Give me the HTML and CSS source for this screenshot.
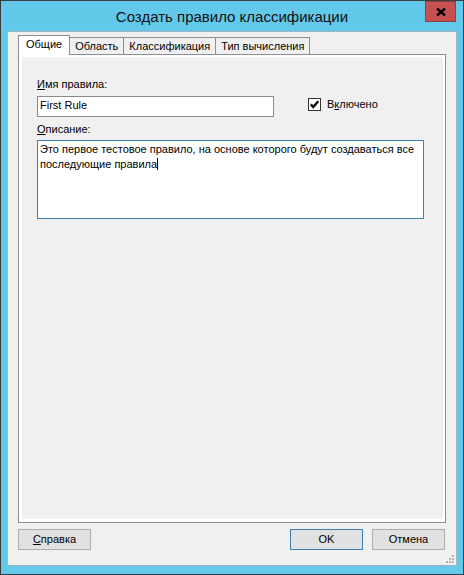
FILE: index.html
```html
<!DOCTYPE html>
<html lang="ru">
<head>
<meta charset="utf-8">
<title>Создать правило классификации</title>
<link rel="stylesheet" href="styles.css">
</head>
<body>
<div class="window">
  <header class="titlebar">
    <span class="title-spacer"></span>
    <h1 class="title">Создать правило классификации</h1>
    <button class="close" type="button" aria-label="Закрыть">
      <svg width="10" height="8" viewBox="0 0 10 8" aria-hidden="true">
        <path d="M1 0.5 L9 7.5 M9 0.5 L1 7.5" stroke="#000" stroke-width="2.4" fill="none"/>
      </svg>
    </button>
  </header>

  <main class="client">
    <nav class="tabs">
      <span class="tab tab-active">Общие</span>
      <span class="tab">Область</span>
      <span class="tab">Классификация</span>
      <span class="tab">Тип вычисления</span>
    </nav>

    <section class="panel">
      <div class="page">
        <div class="field-label"><u>И</u>мя правила:</div>
        <div class="name-row">
          <div class="textbox">First Rule</div>
          <label class="check">
            <span class="check-box">
              <svg width="11" height="11" viewBox="0 0 11 11" aria-hidden="true">
                <path d="M1.8 5.4 L4.3 8 L9.2 2.2" stroke="#000" stroke-width="2.3" fill="none"/>
              </svg>
            </span>
            <span>В<u>к</u>лючено</span>
          </label>
        </div>
        <div class="field-label desc-label"><u>О</u>писание:</div>
        <div class="textarea">Это первое тестовое правило, на основе которого будут создаваться все последующие правила<span class="caret"></span></div>
      </div>
    </section>

    <footer class="buttons">
      <button class="btn" type="button"><u>С</u>правка</button>
      <span class="grow"></span>
      <button class="btn btn-default" type="button">OK</button>
      <button class="btn btn-cancel" type="button">Отмена</button>
    </footer>

    <span class="grip" aria-hidden="true">
      <svg width="8" height="8" viewBox="0 0 8 8">
        <g fill="#b4b4b4">
          <rect x="6" y="0" width="2" height="2"/>
          <rect x="3" y="3" width="2" height="2"/>
          <rect x="6" y="3" width="2" height="2"/>
          <rect x="0" y="6" width="2" height="2"/>
          <rect x="3" y="6" width="2" height="2"/>
          <rect x="6" y="6" width="2" height="2"/>
        </g>
      </svg>
    </span>
  </main>
</div>
</body>
</html>
```

FILE: styles.css
```css
* {
  box-sizing: border-box;
}

html,
body {
  margin: 0;
  padding: 0;
}

body {
  width: 464px;
  height: 575px;
  overflow: hidden;
  background: #ffffff;
  font-family: "Liberation Sans", Arial, sans-serif;
  font-size: 11px;
  color: #000;
}

u {
  text-decoration: underline;
  text-underline-offset: 1px;
}

/* Window frame */
.window {
  width: 464px;
  height: 575px;
  border: 1px solid #3b3b3b;
  background: #63c9ea;
  padding: 0 6px 8px;
  display: flex;
  flex-direction: column;
}

.titlebar {
  height: 30px;
  flex: none;
  display: grid;
  grid-template-columns: 1fr auto 1fr;
  align-items: start;
}

.title {
  margin: 0;
  font-family: "Liberation Sans", Arial, sans-serif;
  font-weight: normal;
  font-size: 15px;
  line-height: 31px;
  color: #111;
  white-space: nowrap;
}

.close {
  justify-self: end;
  margin: 0 1px 0 0;
  width: 31px;
  height: 21px;
  padding: 0;
  border: 1px solid #8f3f3f;
  background: #c75050;
  display: flex;
  align-items: center;
  justify-content: center;
}

.close svg {
  display: block;
}

/* Client area */
.client {
  position: relative;
  height: 535px;
  flex: none;
  background: #f0f0f0;
  border: 1px solid #9fb6c3;
  padding: 3px 10px 0;
  display: flex;
  flex-direction: column;
}

/* Tab strip */
.tabs {
  position: relative;
  z-index: 1;
  display: flex;
  align-items: flex-end;
  height: 19px;
  flex: none;
}

.tab {
  height: 17px;
  padding: 1px 5px 0;
  margin-left: -1px;
  border: 1px solid #8e8f94;
  border-bottom: none;
  background: #f0f0f0;
  line-height: 15px;
  white-space: nowrap;
}

.tab:first-child {
  margin-left: 0;
}

.tab-active {
  position: relative;
  z-index: 2;
  height: 20px;
  margin-bottom: -1px;
  padding: 1px 7px 0;
  background: #ffffff;
}

/* Tab page */
.panel {
  height: 469px;
  flex: none;
  border: 1px solid #8e8f94;
  background: #ffffff;
  padding: 2px 2px 3px 3px;
}

.page {
  height: 100%;
  background: #f0f0f0;
  padding: 20px 0 0 15px;
}

.field-label {
  line-height: 15px;
  height: 15px;
}

.name-row {
  display: flex;
  align-items: flex-start;
  margin-top: 4px;
}

.textbox {
  width: 237px;
  height: 21px;
  border: 1px solid #8a8a8a;
  background: #fff;
  padding: 0 2px;
  line-height: 17px;
  white-space: nowrap;
}

.check {
  display: flex;
  align-items: center;
  gap: 6px;
  height: 13px;
  margin: 2px 0 0 34px;
  line-height: 15px;
}

.check-box {
  width: 13px;
  height: 13px;
  border: 1px solid #333;
  background: #fff;
  display: flex;
  align-items: center;
  justify-content: center;
}

.check-box svg {
  display: block;
}

.desc-label {
  margin-top: 5px;
}

.textarea {
  width: 387px;
  height: 79px;
  margin-top: 3px;
  border: 1px solid #3c7fb1;
  background: #fff;
  padding: 1px 2px;
  line-height: 15px;
}

.caret {
  display: inline-block;
  width: 1px;
  height: 12px;
  background: #000;
  vertical-align: -2px;
}

/* Dialog buttons */
.buttons {
  display: flex;
  align-items: flex-start;
  height: 21px;
  margin-top: 6px;
  flex: none;
}

.grow {
  flex: 1;
}

.btn {
  width: 73px;
  height: 21px;
  padding: 0;
  border: 1px solid #adadad;
  background: #e1e1e1;
  font-family: "Liberation Sans", Arial, sans-serif;
  font-size: 11px;
  line-height: 19px;
  color: #000;
  text-align: center;
}

.btn-default {
  border-color: #3c7fb1;
}

.btn-cancel {
  margin: 0 1px 0 9px;
}

/* Size grip in the client corner */
.grip {
  position: absolute;
  right: 2px;
  bottom: 2px;
  width: 8px;
  height: 8px;
}

.grip svg {
  display: block;
}
```
